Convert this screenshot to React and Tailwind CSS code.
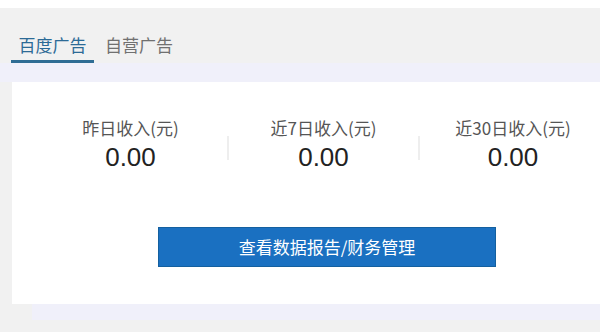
export default function App() {
  const font = { fontFamily: '"Noto Sans CJK SC", "Noto Sans", sans-serif' };
  return (
    <div className="w-[600px] h-[332px] bg-[#f1f1f1] overflow-hidden flex flex-col" style={font}>
      <div className="h-[8px] bg-white shrink-0" />
      <div className="h-[55px] shrink-0 flex items-end pl-[11px]">
        <div className="w-[83px] h-[55px] border-b-[3px] border-[#2f6d94] flex items-end justify-center pb-[3px] text-[17px] leading-[24px] text-[#2c6a96]">
          百度广告
        </div>
        <div className="ml-[10px] w-[70px] h-[55px] border-b-[3px] border-transparent flex items-end justify-center pb-[3px] text-[17px] leading-[24px] text-[#707070]">
          自营广告
        </div>
      </div>
      <div className="h-[19px] bg-[#f0f0fa] shrink-0" />
      <div className="ml-[12px] h-[222px] bg-white shrink-0 overflow-hidden">
        <div className="flex pl-[22px] pt-[34px]">
          <div className="w-[193px] shrink-0 flex flex-col items-center">
            <div className="text-[17px] leading-[24px] text-[#555]">昨日收入(元)</div>
            <div className="mt-[1px] text-[26px] leading-[32px] text-[#222]" style={{ fontFamily: '"Liberation Sans", Arial, sans-serif' }}>0.00</div>
          </div>
          <div className="w-[2px] h-[24px] mt-[20px] bg-[#eeeeee] shrink-0" />
          <div className="w-[189px] shrink-0 flex flex-col items-center">
            <div className="text-[17px] leading-[24px] text-[#555]">近7日收入(元)</div>
            <div className="mt-[1px] text-[26px] leading-[32px] text-[#222]" style={{ fontFamily: '"Liberation Sans", Arial, sans-serif' }}>0.00</div>
          </div>
          <div className="w-[2px] h-[24px] mt-[20px] bg-[#eeeeee] shrink-0" />
          <div className="w-[186px] shrink-0 flex flex-col items-center">
            <div className="text-[17px] leading-[24px] text-[#555] whitespace-nowrap">近30日收入(元)</div>
            <div className="mt-[1px] text-[26px] leading-[32px] text-[#222]" style={{ fontFamily: '"Liberation Sans", Arial, sans-serif' }}>0.00</div>
          </div>
        </div>
        <div className="mt-[54px] ml-[146px] w-[338px] h-[40px] bg-[#1a70c1] border border-[#14609f] flex items-center justify-center text-white text-[17px]">
          查看数据报告/财务管理
        </div>
      </div>
      <div className="h-[16px] ml-[32px] bg-[#f0f0fa] shrink-0" />
    </div>
  );
}
